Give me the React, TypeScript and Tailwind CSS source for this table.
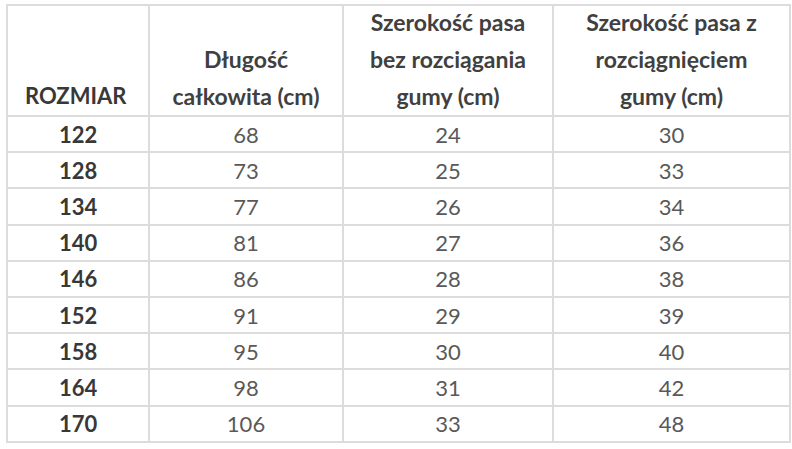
import React from "react";

const rows: [string, string, string, string][] = [
  ["122", "68", "24", "30"],
  ["128", "73", "25", "33"],
  ["134", "77", "26", "34"],
  ["140", "81", "27", "36"],
  ["146", "86", "28", "38"],
  ["152", "91", "29", "39"],
  ["158", "95", "30", "40"],
  ["164", "98", "31", "42"],
  ["170", "106", "33", "48"],
];

const cell = "border-l-2 border-t-2 border-[#dcdcdc]";

export default function App() {
  return (
    <div
      className="w-[792px] h-[449px] bg-white pl-[6px] pt-[4px]"
      style={{ fontFamily: "Lato, 'Open Sans', sans-serif" }}
    >
      <div className="grid grid-cols-[142px_194px_210px_237px] border-r-2 border-b-2 border-[#dcdcdc] w-fit">
        <div className={`${cell} h-[111px] flex items-end pl-[17px] pb-[1px] text-[22px] leading-[36px] font-bold text-[#383838]`}>
          ROZMIAR
        </div>
        <div className={`${cell} h-[111px] flex flex-col justify-end items-center pb-0 text-[23px] leading-[37px] font-bold text-[#404040]`}>
          <span>Długość</span>
          <span>całkowita (cm)</span>
        </div>
        <div className={`${cell} h-[111px] flex flex-col justify-end items-center pb-0 text-[23px] leading-[37px] font-bold text-[#404040]`}>
          <span>Szerokość pasa</span>
          <span>bez rozciągania</span>
          <span>gumy (cm)</span>
        </div>
        <div className={`${cell} h-[111px] flex flex-col justify-end items-center pb-0 text-[23px] leading-[37px] font-bold text-[#404040]`}>
          <span>Szerokość pasa z</span>
          <span>rozciągnięciem</span>
          <span>gumy (cm)</span>
        </div>
        {rows.map((r) => (
          <React.Fragment key={r[0]}>
            <div className={`${cell} h-[36.2px] flex items-center pl-[51px] text-[22px] font-bold text-[#383838]`}>
              {r[0]}
            </div>
            <div className={`${cell} h-[36.2px] flex items-center justify-center text-[22px] text-[#595959]`}>
              {r[1]}
            </div>
            <div className={`${cell} h-[36.2px] flex items-center justify-center text-[22px] text-[#595959]`}>
              {r[2]}
            </div>
            <div className={`${cell} h-[36.2px] flex items-center justify-center text-[22px] text-[#595959]`}>
              {r[3]}
            </div>
          </React.Fragment>
        ))}
      </div>
    </div>
  );
}
